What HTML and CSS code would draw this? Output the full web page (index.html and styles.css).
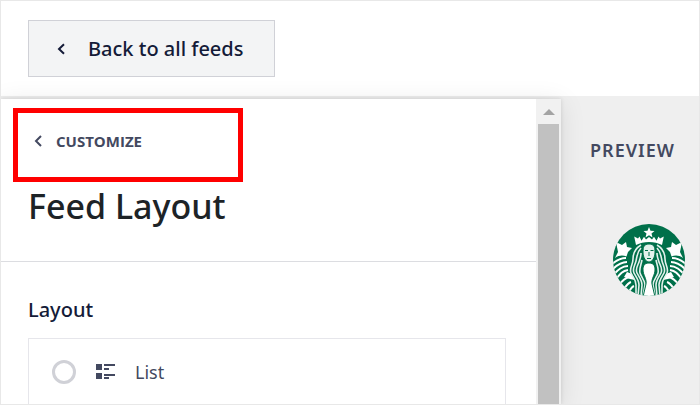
FILE: index.html
```
<!DOCTYPE html>
<html lang="en">
<head>
  <meta charset="UTF-8">
  <meta name="viewport" content="width=device-width, initial-scale=1.0">
  <title>Feed Layout</title>
  <link rel="stylesheet" href="styles.css">
</head>
<body>
  <header class="top-bar">
    <button type="button" class="back-button">
      <svg class="chevron" viewBox="0 0 8 12" aria-hidden="true"><path d="M7 1.2 2 6l5 4.8" /></svg>
      Back to all feeds
    </button>
  </header>

  <main class="editor">
    <section class="panel">
      <div class="panel-content">
        <div class="panel-header">
          <div class="highlight">
            <a href="#" class="breadcrumb">
              <svg class="chevron" viewBox="0 0 8 12" aria-hidden="true"><path d="M7 1 2 6l5 5" /></svg>
              CUSTOMIZE
            </a>
          </div>
          <h1>Feed Layout</h1>
        </div>
        <div class="panel-body">
          <h2>Layout</h2>
          <label class="option">
            <input type="radio" name="layout" value="list">
            <svg class="list-icon" viewBox="0 0 19 16" aria-hidden="true">
              <path d="M0 0h6v6H0zM8 0h11v2H8zM8 4h5v2H8zM0 9h6v6H0zM8 10h11v2H8zM8 13h5v2H8z" />
            </svg>
            <span>List</span>
          </label>
        </div>
      </div>
      <div class="scrollbar" aria-hidden="true">
        <div class="scroll-arrow"></div>
        <div class="scroll-thumb"></div>
      </div>
    </section>

    <aside class="preview">
      <h3>PREVIEW</h3>
      <svg class="logo" viewBox="0 0 72 72" role="img" aria-label="Starbucks">
        <defs>
          <clipPath id="logo-clip"><circle cx="36" cy="36" r="36" /></clipPath>
          <g id="logo-half">
            <!-- crown -->
            <path class="fill" d="M36 13l-3 2.5-2-2.7-2.5 4-2-4.2-1.5 2-3.8-2 1.8 8.4c4-2 8-3 13-3z" />
            <!-- tail fin -->
            <path class="fill" d="M3 18l6 3 4-3 1 5 5 1-4 4-1.5 4.5C10 31 6 31 2 34l3-6z" />
            <!-- tail scales -->
            <path class="line" d="M13 34C8 34 4 36-1 40M14 38C8 38 4 41 0 45M15 42c-6 0-10 4-14 8M15 46c-6 1-8 4-12 9M16 53c-4 1-7 4-10 8M18 58c-3 1-5 4-8 8M21 62c-3 1-4 4-6 8" />
            <path class="fill" d="M14 48l5 2 3 6-5-1-6-2z" />
            <!-- hair -->
            <path class="hair" d="M28 21c-5 3-8 8-8 14s-4 9-2 14 5 6 5 12v11M28 24c-4 4-4 9-5 13s-4 8-2 12 5 7 5 12l-1 11M28 29c0 4-1 6-2 9s-4 7-2 11 5 7 5 12l-1 11M29 36c-1 5-3 9-2 13s5 7 5 12l-2 11" />
          </g>
        </defs>
        <g clip-path="url(#logo-clip)">
          <rect class="green" width="72" height="72" />
          <use href="#logo-half" />
          <use href="#logo-half" transform="matrix(-1 0 0 1 72 0)" />
          <path class="fill" d="M36 3l1.5 3.7 4 .3-3 2.5 1 4-3.5-2.2-3.5 2.2 1-4-3-2.5 4-.3z" />
          <!-- torso -->
          <path class="torso" d="M36 39c-5 0-6 3-6 7 0 5 4 9 3 14l-3 13h12l-3-13c-1-5 3-9 3-14 0-4-1-7-6-7z" />
          <!-- face -->
          <path class="face" d="M36 20c-5 0-6 3-6 8 0 6 3 10 6 10s6-4 6-10c0-5-1-8-6-8z" />
          <path class="feature" d="M32 26.5h3M37.5 26.5h3M36 28v4M34 34.5h4" />
        </g>
      </svg>
    </aside>
  </main>
</body>
</html>
```
FILE: styles.css
```
* {
  box-sizing: border-box;
}

body {
  display: flex;
  flex-direction: column;
  height: 100vh;
  margin: 0;
  border: 1px solid #e8e8e8;
  background: #fff;
  color: #141b38;
  font-family: "Noto Sans", "Open Sans", sans-serif;
  overflow: hidden;
}

h1, h2, h3 {
  margin: 0;
  font-weight: 500;
}

.chevron {
  width: 8px;
  height: 12px;
  fill: none;
  stroke: currentColor;
  stroke-width: 2;
}

.top-bar {
  padding: 19px 27px;
}

.back-button {
  display: flex;
  align-items: center;
  gap: 23px;
  height: 57px;
  padding: 0 31px 0 28px;
  border: 1px solid #d0d1d7;
  background: #f3f4f5;
  color: #141b38;
  font: 500 20px "Noto Sans", "Open Sans", sans-serif;
}

.editor {
  display: flex;
  flex: 1;
  min-height: 0;
  background: #efefef;
}

.panel {
  display: flex;
  flex: 1;
  margin-top: 3px;
  background: #fff;
  box-shadow: 0 0 4px rgba(0, 0, 0, 0.12), 0 4px 24px rgba(0, 0, 0, 0.1);
}

.panel-content {
  flex: 1;
  overflow: hidden;
}

.panel-header {
  padding: 9px 12px 31px;
  border-bottom: 1px solid #dcdde1;
}

.highlight {
  width: 230px;
  height: 74px;
  padding: 18px 16px;
  border: 5px solid #f00;
}

.breadcrumb {
  display: flex;
  align-items: center;
  gap: 14px;
  color: #434960;
  font-family: "Open Sans", "Noto Sans", sans-serif;
  font-size: 15px;
  font-weight: 700;
  line-height: 20px;
  text-decoration: none;
}

h1 {
  padding-left: 15px;
  color: #1d2327;
  font-size: 34px;
  line-height: 48px;
}

.panel-body {
  padding: 34px 30px 0 27px;
}

h2 {
  margin-bottom: 14px;
  font-size: 20px;
  line-height: 28px;
}

.option {
  display: flex;
  align-items: center;
  height: 68px;
  padding: 0 23px;
  border: 1px solid #e6e6eb;
  color: #434960;
  font-size: 18px;
}

.option input {
  appearance: none;
  width: 24px;
  height: 24px;
  margin: 0 20px 0 0;
  border: 3px solid #d0d1d7;
  border-radius: 50%;
}

.list-icon {
  width: 19px;
  height: 16px;
  margin-right: 20px;
  fill: #434960;
}

.scrollbar {
  display: flex;
  flex-direction: column;
  align-items: center;
  width: 25px;
  background: #f1f1f1;
}

.scroll-arrow {
  margin: 10px 0 9px;
  border: 6px solid transparent;
  border-top: 0;
  border-bottom-color: #a3a3a3;
}

.scroll-thumb {
  flex: 1;
  width: 21px;
  background: #c1c1c1;
}

.preview {
  width: 138px;
  padding: 42px 0 0 29px;
}

h3 {
  color: #434960;
  font-size: 18px;
  font-weight: 600;
  line-height: 24px;
  letter-spacing: 1px;
}

.logo {
  display: block;
  width: 72px;
  height: 72px;
  margin: 62px 0 0 23px;
}

.logo .green {
  fill: #00704a;
}

.logo .fill {
  fill: #fff;
}

.logo .torso {
  fill: #fff;
  stroke: #00704a;
}

.logo .face {
  fill: #e3f1ec;
  stroke: #00704a;
}

.logo .line {
  fill: none;
  stroke: #fff;
  stroke-width: 2;
}

.logo .hair {
  fill: none;
  stroke: #e3f1ec;
  stroke-width: 1.6;
}

.logo .feature {
  fill: none;
  stroke: #00704a;
}
```
